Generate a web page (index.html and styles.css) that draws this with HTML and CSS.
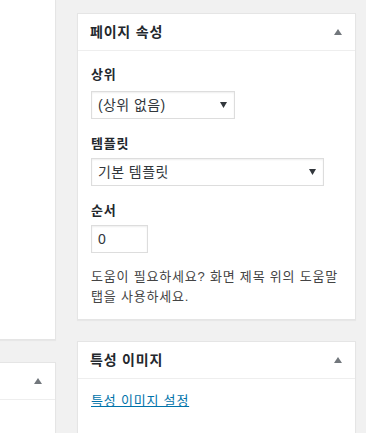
FILE: index.html
```html
<!DOCTYPE html>
<html lang="ko">
<head>
    <meta charset="UTF-8">
    <meta name="viewport" content="width=device-width, initial-scale=1.0">
    <title>페이지 속성</title>
    <link rel="stylesheet" href="styles.css">
</head>
<body>
    <div class="columns">
        <div class="main-col">
            <div class="postbox editor-box"></div>
            <div class="postbox side-box">
                <div class="hndle">
                    <h2></h2>
                    <svg class="toggle" width="8" height="6" viewBox="0 0 8 6"><polygon points="4,0 8,6 0,6" fill="#72777c"/></svg>
                </div>
            </div>
        </div>

        <div class="side-col">
            <div class="postbox attrs-box">
                <div class="hndle">
                    <h2>페이지 속성</h2>
                    <svg class="toggle" width="8" height="6" viewBox="0 0 8 6"><polygon points="4,0 8,6 0,6" fill="#72777c"/></svg>
                </div>
                <div class="inside">
                    <p class="label first">상위</p>
                    <div class="select parent-select">
                        <span>(상위 없음)</span>
                        <svg width="7" height="6" viewBox="0 0 7 6"><polygon points="0,0 7,0 3.5,6" fill="#32373c"/></svg>
                    </div>

                    <p class="label">템플릿</p>
                    <div class="select template-select">
                        <span>기본 템플릿</span>
                        <svg width="7" height="6" viewBox="0 0 7 6"><polygon points="0,0 7,0 3.5,6" fill="#32373c"/></svg>
                    </div>

                    <p class="label">순서</p>
                    <div class="order-input">0</div>

                    <p class="help">도움이 필요하세요? 화면 제목 위의 도움말 탭을 사용하세요.</p>
                </div>
            </div>

            <div class="postbox thumb-box">
                <div class="hndle">
                    <h2>특성 이미지</h2>
                    <svg class="toggle" width="8" height="6" viewBox="0 0 8 6"><polygon points="4,0 8,6 0,6" fill="#72777c"/></svg>
                </div>
                <div class="inside">
                    <a href="#" class="thumb-link">특성 이미지 설정</a>
                </div>
            </div>
        </div>
    </div>
</body>
</html>
```

FILE: styles.css
```css
body {
    margin: 0;
    background: #f1f1f1;
    font-family: "Liberation Sans", "Noto Sans CJK KR", sans-serif;
    font-size: 13px;
    color: #444;
    letter-spacing: 0.8px;
    word-break: keep-all;
    overflow: hidden;
}
.columns {
    display: flex;
    gap: 21px;
    align-items: flex-start;
}
.main-col {
    width: 56px;
    flex-shrink: 0;
}
.side-col {
    width: 279px;
    flex-shrink: 0;
    padding-top: 13px;
}
.postbox {
    background: #fff;
    border: 1px solid #e5e5e5;
    box-shadow: 0 1px 1px rgba(0,0,0,0.04);
    box-sizing: border-box;
}
.editor-box {
    height: 340px;
    border-top: none;
    border-left: none;
}
.side-box {
    margin-top: 22px;
    height: 120px;
    border-left: none;
}
.hndle {
    display: flex;
    align-items: center;
    justify-content: space-between;
    padding: 8px 13px 8px 12px;
    border-bottom: 1px solid #eee;
    height: 20px;
}
.hndle h2 {
    margin: 0;
    font-size: 14px;
    font-weight: 700;
    line-height: 20px;
    color: #23282d;
}
.toggle {
    display: block;
    margin-top: -1px;
}
.side-box .hndle {
    padding-right: 13px;
    justify-content: flex-end;
}
.inside {
    padding: 0 12px 11px 13px;
}
.label {
    margin: 15px 0 4px;
    line-height: 20px;
    font-weight: 700;
    color: #23282d;
}
.label.first {
    margin: 14px 0 6px;
}
.select {
    display: flex;
    align-items: center;
    justify-content: space-between;
    height: 28px;
    box-sizing: border-box;
    border: 1px solid #ddd;
    box-shadow: inset 0 1px 2px rgba(0,0,0,0.07);
    padding: 0 7px 0 6px;
    font-size: 14px;
    letter-spacing: 0.4px;
    color: #32373c;
}
.select span {
    line-height: 26px;
}
.parent-select {
    width: 144px;
}
.template-select {
    width: 233px;
}
.order-input {
    width: 57px;
    height: 28px;
    box-sizing: border-box;
    margin-top: 6px;
    border: 1px solid #ddd;
    box-shadow: inset 0 1px 2px rgba(0,0,0,0.07);
    padding: 0 6px;
    line-height: 26px;
    font-size: 14px;
    color: #32373c;
}
.label + .order-input {
    margin-top: 0;
}
.help {
    margin: 14px 0 0;
    line-height: 20px;
    color: #444;
}
.attrs-box {
    height: 307px;
}
.thumb-box {
    margin-top: 21px;
    height: 120px;
}
.thumb-link {
    display: inline-block;
    margin-top: 12px;
    line-height: 20px;
    color: #0073aa;
    text-decoration: underline;
}
```
